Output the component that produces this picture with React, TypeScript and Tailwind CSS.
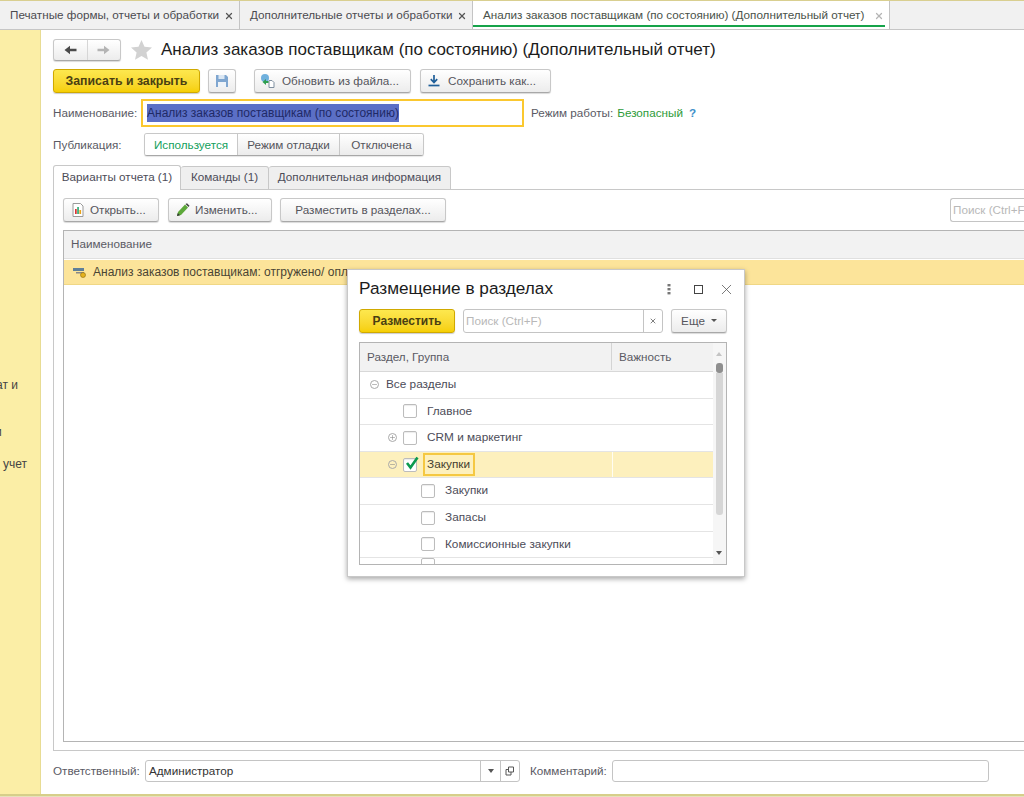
import { Minus, Plus, X } from 'lucide-react';

const font = { fontFamily: '"Liberation Sans", Arial, sans-serif' };

function Btn({ children, className = '' }: { children: React.ReactNode; className?: string }) {
  return (
    <div className={`flex h-[24px] items-center rounded-[3px] border border-[#c8c8c8] border-b-[#a8a8a8] bg-gradient-to-b from-white to-[#ececec] text-[11.7px] text-[#55555c] shadow-[0_1px_1px_rgba(0,0,0,0.15)] ${className}`}>
      {children}
    </div>
  );
}

function YellowBtn({ children, className = '' }: { children: React.ReactNode; className?: string }) {
  return (
    <div className={`flex h-[24px] items-center justify-center rounded-[3px] border border-[#d0a900] bg-gradient-to-b from-[#fde84e] to-[#f6cf00] font-bold text-[#4a3f12] shadow-[0_1px_1px_rgba(0,0,0,0.2)] ${className}`}>
      {children}
    </div>
  );
}

function TopTab({ label, width, active }: { label: string; width: string; active?: boolean }) {
  return (
    <div className={`relative flex h-full shrink-0 items-center border-r border-[#c4c4c4] pl-[10px] text-[11.7px] ${width} ${active ? 'bg-white text-[#4a524a]' : 'bg-[#f1f1f1] text-[#4b4b50]'}`}>
      <span className="whitespace-nowrap">{label}</span>
      <X size={10} strokeWidth={3} className={`absolute right-[5px] top-[10px] ${active ? 'text-[#b5b5b5]' : 'text-[#555555]'}`} />
      {active && <div className="absolute bottom-[2px] left-[0px] right-[4px] h-[2px] bg-[#16a34a]" />}
    </div>
  );
}

function Box({ checked }: { checked?: boolean }) {
  return (
    <div className="relative h-[14px] w-[14px] shrink-0 rounded-[2px] border border-[#bcbcbc] bg-white shadow-[inset_0_1px_1px_rgba(0,0,0,0.08)]">
      {checked && (
        <svg viewBox="0 0 16 16" className="absolute left-[0px] top-[-4px] h-[16px] w-[16px]">
          <path d="M3 8 L6.5 12.5 L13.5 2.5" fill="none" stroke="#0c9a4e" strokeWidth="2.6" />
        </svg>
      )}
    </div>
  );
}

function TreeRow({ indent, toggle, label, checked, active, noBox }: { indent: string; toggle?: 'open' | 'closed'; label: string; checked?: boolean; active?: boolean; noBox?: boolean }) {
  return (
    <div className={`flex h-[26.6px] shrink-0 items-center border-b border-[#e4e4e4] text-[11.8px] text-[#4c4c58] ${active ? 'bg-[#fdf0bd]' : ''}`}>
      <div className={`flex flex-1 items-center ${indent}`}>
        {toggle && (
          <div className="mr-[6px] flex h-[9px] w-[9px] items-center justify-center rounded-full border border-[#a9a9a9] text-[#8a8a8a]">
            {toggle === 'open' ? <Minus size={7} strokeWidth={2} /> : <Plus size={7} strokeWidth={2} />}
          </div>
        )}
        {!noBox && <Box checked={checked} />}
        {active ? (
          <span className="ml-[6px] flex h-[23px] w-[52px] items-center border-2 border-[#f5c842] pl-[2px] text-[#444030]">{label}</span>
        ) : (
          <span className={noBox ? 'ml-[1px]' : 'ml-[10px]'}>{label}</span>
        )}
      </div>
      {active && <div className="h-full w-[101px] shrink-0 border-l border-[#fffdf2]" />}
    </div>
  );
}

function Modal() {
  return (
    <div className="absolute left-[347px] top-[269px] flex h-[308px] w-[398px] flex-col border border-[#c8c8c8] bg-white px-[11px] shadow-[0_2px_5px_rgba(0,0,0,0.35)]" style={font}>
      <div className="flex h-[38px] shrink-0 items-center justify-between">
        <span className="text-[17.2px] text-[#1c1c1c]">Размещение в разделах</span>
        <div className="flex items-center">
          <svg width="4" height="12" viewBox="0 0 4 12" className="mr-[23px]">
            <rect x="0.5" y="1" width="3" height="2.4" fill="#777777" />
            <rect x="0.5" y="5" width="3" height="2.4" fill="#777777" />
            <rect x="0.5" y="9" width="3" height="2.4" fill="#777777" />
          </svg>
          <div className="mr-[15px] h-[9px] w-[9px] border border-[#444444]" />
          <X size={17} strokeWidth={1.1} className="mr-[-2px] text-[#555555]" />
        </div>
      </div>
      <div className="flex h-[25px] shrink-0 items-center">
        <YellowBtn className="w-[96px] text-[12px]">Разместить</YellowBtn>
        <div className="ml-[8px] flex h-[24px] w-[200px] items-center rounded-[3px] border border-[#c4c4c4] text-[11.7px] text-[#b8b8b8]">
          <span className="flex-1 pl-[2px]">Поиск (Ctrl+F)</span>
          <div className="flex h-full w-[19px] items-center justify-center border-l border-[#c4c4c4] text-[#666666]">
            <X size={8} strokeWidth={2.5} />
          </div>
        </div>
        <Btn className="ml-[8px] w-[56px] justify-center">
          Еще
          <span className="ml-[6px] h-0 w-0 border-x-[3px] border-t-[3px] border-x-transparent border-t-[#555555]" />
        </Btn>
      </div>
      <div className="mt-[9px] flex h-[223px] w-[368px] shrink-0 overflow-hidden border border-[#b4b4b4]">
        <div className="flex min-w-0 flex-1 flex-col">
          <div className="flex h-[29px] shrink-0 border-b border-[#d8d8d8] bg-[#f2f2f2] pb-[1px] text-[11.7px] text-[#5a5a64]">
            <div className="flex flex-1 items-center border-r border-[#d4d4d4] pl-[7px]">Раздел, Группа</div>
            <div className="flex w-[101px] items-center pl-[7px]">Важность</div>
          </div>
          <TreeRow indent="pl-[10px]" toggle="open" label="Все разделы" noBox />
          <TreeRow indent="pl-[43px]" label="Главное" />
          <TreeRow indent="pl-[28px]" toggle="closed" label="CRM и маркетинг" />
          <TreeRow indent="pl-[28px]" toggle="open" label="Закупки" checked active />
          <TreeRow indent="pl-[61px]" label="Закупки" />
          <TreeRow indent="pl-[61px]" label="Запасы" />
          <TreeRow indent="pl-[61px]" label="Комиссионные закупки" />
          <div className="ml-[61px] h-[14px] w-[14px] shrink-0 rounded-[2px] border border-[#bcbcbc]" />
        </div>
        <div className="relative w-[13px] shrink-0 bg-[#f6f6f6]">
          <span className="absolute left-[3px] top-[9px] h-0 w-0 border-x-[3px] border-b-[4px] border-x-transparent border-b-[#c4c4c4]" />
          <div className="absolute left-[3px] top-[20px] h-[10px] w-[7px] rounded-[3px] bg-[#8f8f8f]" />
          <div className="absolute left-[3px] top-[30px] h-[142px] w-[7px] rounded-b-[3px] bg-[#d6d6d6]" />
          <span className="absolute bottom-[9px] left-[3px] h-0 w-0 border-x-[3px] border-t-[4px] border-x-transparent border-t-[#555555]" />
        </div>
      </div>
    </div>
  );
}

export default function App() {
  return (
    <div className="relative flex h-[797px] w-[1024px] flex-col overflow-hidden bg-white" style={font}>
      {/* open windows */}
      <div className="flex h-[30px] shrink-0 border-t border-b border-t-[#d9cf90] border-b-[#c6c6c6] bg-[#f1f1f1]">
        <TopTab label="Печатные формы, отчеты и обработки" width="w-[240px]" />
        <TopTab label="Дополнительные отчеты и обработки" width="w-[233px]" />
        <TopTab label="Анализ заказов поставщикам (по состоянию) (Дополнительный отчет)" width="w-[417px]" active />
      </div>

      <div className="flex min-h-0 flex-1">
        {/* section panel */}
        <div className="flex w-[41px] shrink-0 flex-col overflow-hidden border-r border-[#e8dc94] bg-[#fbeea6] text-[12px] text-[#444444]">
          <div className="ml-[-4px] mt-[346px] h-[14px] whitespace-nowrap">ат и</div>
          <div className="ml-[-5px] mt-[33px] h-[14px] whitespace-nowrap">и</div>
          <div className="mt-[18px] h-[14px] whitespace-nowrap pl-[3px]">учет</div>
        </div>

        <div className="flex min-w-0 flex-1 flex-col pl-[12px]">
          {/* title */}
          <div className="mt-[8px] flex h-[23px] shrink-0 items-center">
            <div className="flex h-[22px] w-[68px] rounded-[3px] border border-[#c8c8c8] border-b-[#a8a8a8] bg-gradient-to-b from-white to-[#ececec] shadow-[0_1px_1px_rgba(0,0,0,0.15)]">
              <div className="flex flex-1 items-center justify-center border-r border-[#d6d6d6]">
                <svg width="13" height="10" viewBox="0 0 13 10"><path d="M0.500 5 6 0.800V3.800H12.500V6.200H6V9.200z" fill="#4a4a4a" /></svg>
              </div>
              <div className="flex flex-1 items-center justify-center">
                <svg width="13" height="10" viewBox="0 0 13 10"><path d="M12.500 5 7 0.800V3.800H0.500V6.200H7V9.200z" fill="#b4b4b4" /></svg>
              </div>
            </div>
            <svg width="21" height="20" viewBox="0 0 21 20" className="ml-[10px]">
              <path d="M10.5 0l3 6.7 7.5.8-5.6 4.9 1.6 7.3-6.5-3.8L4 19.7l1.6-7.3L0 7.500l7.500-.8z" fill="#d2d2d2" />
            </svg>
            <h1 className="ml-[9px] whitespace-nowrap text-[17px] text-[#1c1c1c]">Анализ заказов поставщикам (по состоянию) (Дополнительный отчет)</h1>
          </div>

          {/* actions */}
          <div className="mt-[8px] flex h-[24px] shrink-0 items-center">
            <YellowBtn className="w-[147px] text-[12.3px]">Записать и закрыть</YellowBtn>
            <Btn className="ml-[8px] w-[28px] justify-center">
              <svg width="14" height="14" viewBox="0 0 14 14">
                <path d="M1 1h10l2 2v10H1z" fill="#7fa6d0" />
                <rect x="3.500" y="1" width="6" height="4" fill="#dbe7f3" />
                <rect x="3" y="8" width="8" height="5" fill="#eef3f8" />
              </svg>
            </Btn>
            <Btn className="ml-[18px] w-[157px] pl-[5px]">
              <svg width="16" height="16" viewBox="0 0 16 16">
                <circle cx="5" cy="5" r="4" fill="#6fb0dd" />
                <path d="M9 7.500h3l2 2v5H9z" fill="#ffffff" stroke="#7f8f9f" />
                <path d="M2.500 9 6 6v2h2.500v2H6v2z" fill="#2e9e4f" />
              </svg>
              <span className="ml-[6px]">Обновить из файла...</span>
            </Btn>
            <Btn className="ml-[9px] w-[131px] pl-[6px]">
              <svg width="14" height="14" viewBox="0 0 14 14">
                <path d="M7 1v7M3.800 5.200 7 8.500l3.200-3.300" fill="none" stroke="#1f5f99" strokeWidth="1.700" />
                <path d="M1.500 11.500h11" stroke="#1f5f99" strokeWidth="1.700" />
              </svg>
              <span className="ml-[7px]">Сохранить как...</span>
            </Btn>
          </div>

          {/* name */}
          <div className="mt-[6px] flex h-[28px] shrink-0 items-center text-[11.7px] text-[#5a5a64]">
            <span className="w-[88px]">Наименование:</span>
            <div className="flex h-[28px] w-[383px] items-center border-2 border-[#fbc82f] pl-[4px] text-[12px]">
              <span className="bg-[#5b6fc6] text-[#1f2a66]">Анализ заказов поставщикам (по состоянию)</span>
            </div>
            <span className="ml-[7px]">Режим работы:</span>
            <span className="ml-[4px] text-[#2e9b3a]">Безопасный</span>
            <span className="ml-[6px] font-bold text-[#3e90c9]">?</span>
          </div>

          {/* publication */}
          <div className="mt-[6px] flex h-[23px] shrink-0 items-center text-[11.7px] text-[#5a5a64]">
            <span className="w-[91px]">Публикация:</span>
            <div className="flex h-[23px] w-[280px] overflow-hidden rounded-[3px] border border-[#c8c8c8] border-b-[#a8a8a8] shadow-[0_1px_1px_rgba(0,0,0,0.1)]">
              <div className="flex w-[93px] items-center justify-center border-r border-[#c8c8c8] bg-white text-[#12a05c]">Используется</div>
              <div className="flex w-[102px] items-center justify-center border-r border-[#c8c8c8] bg-gradient-to-b from-white to-[#ececec] text-[#55555c]">Режим отладки</div>
              <div className="flex flex-1 items-center justify-center bg-gradient-to-b from-white to-[#ececec] text-[#55555c]">Отключена</div>
            </div>
          </div>

          {/* report tabs */}
          <div className="mt-[9px] flex h-[25px] shrink-0 items-end text-[11.7px]">
            <div className="flex h-[25px] w-[128px] items-center justify-center rounded-t-[3px] border border-b-0 border-[#c8c8c8] bg-white pb-[2px] text-[#4c4c58]">Варианты отчета (1)</div>
            <div className="flex h-[24px] w-[88px] items-center justify-center rounded-t-[3px] border border-l-0 border-[#c8c8c8] bg-[#efefef] pb-[2px] text-[#4c4c58]">Команды (1)</div>
            <div className="flex h-[24px] w-[182px] items-center justify-center rounded-t-[3px] border border-l-0 border-[#c8c8c8] bg-[#efefef] pb-[2px] text-[#4c4c58]">Дополнительная информация</div>
            <div className="flex-1 border-b border-[#c8c8c8]" />
          </div>

          {/* report panel */}
          <div className="flex min-h-0 flex-1 flex-col border-b border-l border-[#c8c8c8] pl-[9px]">
            <div className="mt-[8px] flex h-[24px] shrink-0 items-center">
              <Btn className="w-[96px] pl-[8px]">
                <svg width="12" height="14" viewBox="0 0 12 14">
                  <path d="M1 .5h7.500L11 3v10.500H1z" fill="#ffffff" stroke="#9a9a9a" />
                  <rect x="3" y="6" width="1.700" height="5" fill="#d33" />
                  <rect x="5.200" y="4" width="1.700" height="7" fill="#3a7" />
                  <rect x="7.400" y="7" width="1.700" height="4" fill="#e8a21a" />
                </svg>
                <span className="ml-[6px]">Открыть...</span>
              </Btn>
              <Btn className="ml-[9px] w-[104px] pl-[7px]">
                <svg width="14" height="14" viewBox="0 0 14 14">
                  <path d="M1 13l1-4 7-7.500 3 3-7 7.500z" fill="#5da83a" />
                  <path d="M9.500 1l3 3 1-1.200L11 .2z" fill="#444444" />
                  <path d="M1 13l.8-3 2.200 2.200z" fill="#333333" />
                </svg>
                <span className="ml-[5px]">Изменить...</span>
              </Btn>
              <Btn className="ml-[8px] w-[166px] justify-center">Разместить в разделах...</Btn>
              <div className="ml-auto flex h-[24px] w-[74px] items-center overflow-hidden whitespace-nowrap rounded-l-[3px] border border-r-0 border-[#c4c4c4] pl-[2px] text-[11.7px] text-[#b8b8b8]">Поиск (Ctrl+F)</div>
            </div>

            <div className="mb-[8px] mt-[8px] flex min-h-0 flex-1 flex-col border-b border-l border-t border-[#b4b4b4]">
              <div className="flex h-[28px] shrink-0 items-center border-b border-[#e0e0e0] bg-[#f2f2f2] pb-[1px] pl-[7px] text-[11.7px] text-[#5a5a64]">Наименование</div>
              <div className="mt-[1px] flex h-[25px] shrink-0 items-center border-b border-[#f0d785] bg-[#fce49a] pl-[9px] text-[12px] text-[#4a4534]">
                <svg width="14" height="12" viewBox="0 0 14 12">
                  <rect x="0" y="2" width="11" height="3" fill="#5f7f99" />
                  <rect x="3" y="6" width="8" height="1.500" fill="#888888" />
                  <circle cx="10" cy="9" r="2.500" fill="#e5b21e" stroke="#8a6a10" strokeWidth="0.6" />
                </svg>
                <span className="ml-[6px]">Анализ заказов поставщикам: отгружено/ опл</span>
              </div>
            </div>
          </div>

          {/* footer */}
          <div className="flex h-[43px] shrink-0 items-start pt-[9px] text-[11.7px] text-[#5a5a64]">
            <span className="flex h-[22px] w-[92px] items-center">Ответственный:</span>
            <div className="flex h-[22px] w-[375px] items-center rounded-[3px] border border-[#c4c4c4] text-[#333333]">
              <span className="flex-1 pl-[3px]">Администратор</span>
              <div className="flex h-full w-[20px] items-center justify-center border-l border-[#c4c4c4]">
                <span className="h-0 w-0 border-x-[3px] border-t-[4px] border-x-transparent border-t-[#555555]" />
              </div>
              <div className="flex h-full w-[19px] items-center justify-center border-l border-[#c4c4c4]">
                <svg width="10" height="10" viewBox="0 0 10 10"><path d="M3.500 1h5v5h-5zM3.500 3.500H1V9h5V6" fill="none" stroke="#555555" /></svg>
              </div>
            </div>
            <span className="ml-[10px] flex h-[22px] w-[82px] items-center">Комментарий:</span>
            <div className="h-[22px] w-[377px] rounded-[3px] border border-[#c4c4c4]" />
          </div>
        </div>
      </div>

      <div className="h-[3px] shrink-0 border-t-2 border-[#d6cf8a] bg-[#e6e2bc]" />

      <Modal />
    </div>
  );
}
